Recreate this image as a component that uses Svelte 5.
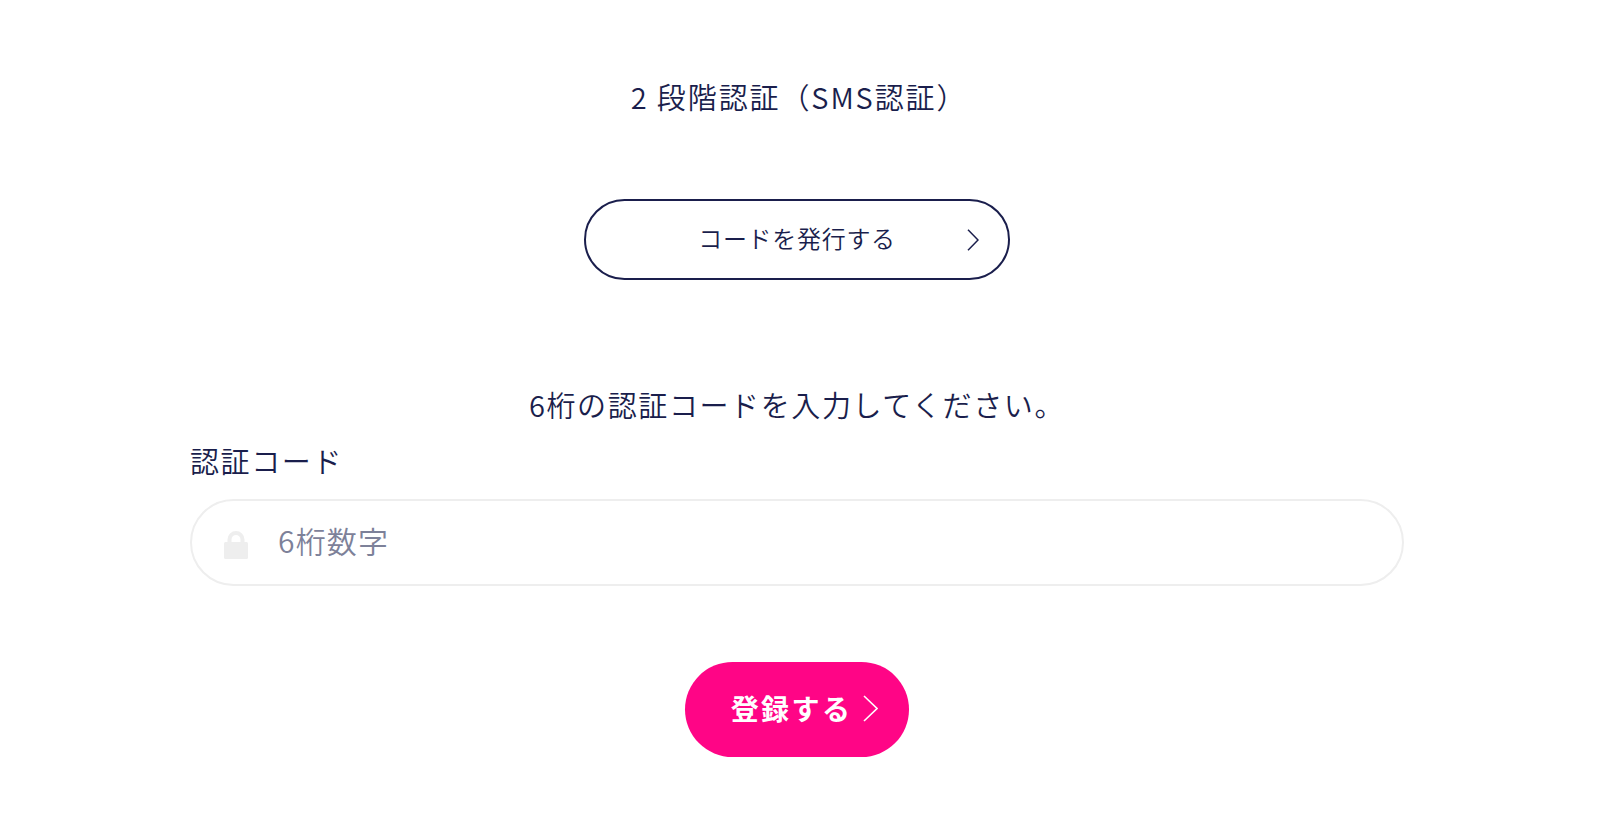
<script>
  let code = $state('');
</script>

<main class="page">
  <h1 class="title">2 段階認証（SMS認証）</h1>

  <button class="issue" type="button">
    <span>コードを発行する</span>
    <svg class="issue-chevron" viewBox="0 0 12 22" aria-hidden="true"><path d="M1 .7 L11 11 L1 21.3" /></svg>
  </button>

  <p class="lead">6桁の認証コードを入力してください。</p>

  <label class="label" for="code">認証コード</label>
  <div class="field">
    <svg class="lock" viewBox="0 0 24 28" aria-hidden="true">
      <path d="M5.5 12 V8.5 a6.5 6.5 0 0 1 13 0 V12" class="shackle" />
      <rect x="0" y="11" width="24" height="17" rx="1.5" class="body" />
    </svg>
    <input id="code" bind:value={code} placeholder="6桁数字" />
  </div>

  <button class="submit" type="button">
    <span>登録する</span>
    <svg class="submit-chevron" viewBox="0 0 15 27" aria-hidden="true"><path d="M1 1 L14 13.5 L1 26" /></svg>
  </button>
</main>

<style>
  :global(body) {
    margin: 0;
    background: #fff;
    font-family: "Noto Sans CJK JP", "Noto Sans", sans-serif;
    color: #1a1e4c;
  }
  .page {
    box-sizing: border-box;
    width: 1600px;
    padding: 76px 196px 0 190px;
    display: flex;
    flex-direction: column;
    align-items: center;
  }
  .title {
    margin: 0;
    padding-left: 4px;
    font-size: 29px;
    font-weight: 350;
    line-height: 40px;
    letter-spacing: 1.9px;
  }
  .issue {
    position: relative;
    box-sizing: border-box;
    width: 426px;
    height: 81px;
    margin-top: 83px;
    border: 2px solid #1a1e4c;
    border-radius: 41px;
    background: #fff;
    color: #1a1e4c;
    font: inherit;
    font-size: 24px;
    font-weight: 350;
    letter-spacing: 0.7px;
    padding: 0 0 4px;
  }
  .issue-chevron {
    position: absolute;
    right: 29px;
    top: 28px;
    width: 12px;
    height: 22px;
  }
  .issue-chevron path {
    fill: none;
    stroke: #1a1e4c;
    stroke-width: 1.5;
  }
  .lead {
    margin: 104px 0 0;
    font-size: 29px;
    font-weight: 350;
    line-height: 40px;
    letter-spacing: 1.6px;
  }
  .label {
    align-self: flex-start;
    margin-top: 16px;
    font-size: 29px;
    font-weight: 350;
    line-height: 40px;
    letter-spacing: 1.6px;
  }
  .field {
    box-sizing: border-box;
    width: 100%;
    height: 87px;
    margin-top: 19px;
    display: flex;
    align-items: center;
    gap: 30px;
    padding: 0 32px;
    border: 2px solid #eeeeee;
    border-radius: 44px;
  }
  .lock {
    flex: none;
    width: 24px;
    height: 28px;
    margin-top: 4px;
  }
  .shackle {
    fill: none;
    stroke: #eeeeee;
    stroke-width: 4;
  }
  .body {
    fill: #eeeeee;
  }
  input {
    flex: 1;
    min-width: 0;
    border: 0;
    outline: 0;
    padding: 0 0 5px;
    background: transparent;
    font: inherit;
    font-size: 30px;
    font-weight: 350;
    letter-spacing: 1.2px;
    color: #1a1e4c;
  }
  input::placeholder {
    color: #7d8199;
    opacity: 1;
  }
  .submit {
    box-sizing: border-box;
    width: 224px;
    height: 95px;
    margin-top: 76px;
    border: 0;
    border-radius: 48px;
    background: #ff0586;
    color: #fff;
    font: inherit;
    font-size: 28px;
    font-weight: 700;
    letter-spacing: 2.4px;
    padding: 0 0 3px 15px;
    display: flex;
    align-items: center;
    justify-content: center;
    gap: 11px;
  }
  .submit-chevron {
    width: 15px;
    height: 27px;
  }
  .submit-chevron path {
    fill: none;
    stroke: #fff;
    stroke-width: 1.6;
  }
</style>
